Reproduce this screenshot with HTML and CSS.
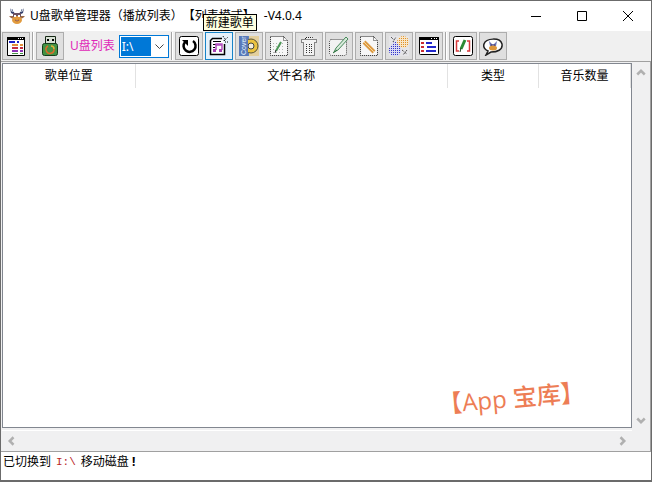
FILE: index.html
```html
<!DOCTYPE html>
<html lang="zh-CN">
<head>
<meta charset="utf-8">
<title>U盘歌单管理器</title>
<link rel="stylesheet" href="styles.css">
</head>
<body>
<div class="window">
  <header class="titlebar">
    <svg class="logo" viewBox="0 0 16 16" aria-hidden="true">
      <path d="M1 0l1 5 4 2-1-3-2 0zM15 0l-1 5-4 2 1-3 2 0z" fill="#34406e"/>
      <path d="M3 1l1 3M13 1l-1 3" stroke="#71809f"/>
      <path d="M4 5h8v5l-4 2-4-2z" fill="#6b5262"/>
      <path d="M0 8l4 0 1 3-3-1zM16 8l-4 0-1 3 3-1z" fill="#9b6948"/>
      <ellipse cx="8" cy="12" rx="5" ry="4" fill="#e29b3e"/>
      <path d="M5 7h2v2H5zM9 7h2v2H9z" fill="#fff"/>
      <path d="M6 12q2 2 4 0" fill="#fff" stroke="#8b4a35"/>
    </svg>
    <h1 class="title">U盘歌单管理器（播放列表）【列表模式】</h1>
    <span class="version">-V4.0.4</span>
    <div class="controls">
      <button class="control" aria-label="最小化"><svg viewBox="0 0 12 12"><path d="M1 6.5h10"/></svg></button>
      <button class="control" aria-label="最大化"><svg viewBox="0 0 12 12"><path d="M1.5 1.5h9v9h-9z"/></svg></button>
      <button class="control" aria-label="关闭"><svg viewBox="0 0 12 12"><path d="M1 1l10 10M11 1L1 11"/></svg></button>
    </div>
  </header>

  <nav class="toolbar">
    <button class="tool" aria-label="列表模式">
      <svg viewBox="0 0 20 20"><path d="M1.5 1.5h17v18h-17z" fill="#fff" stroke="#000"/><path d="M1 1h18v3H1z"/><path d="M12 2.5h1M14 2.5h1M16 2.5h1" stroke="#fff"/><path d="M3 6h6M11 6h2" stroke="#1d20c9" stroke-width="2"/><path d="M6 9h6M14 9h3" stroke="#e3913a" stroke-width="2"/><path d="M6 12h6M14 12h3" stroke="#c52d42" stroke-width="2"/><path d="M6 15h6M14 15h3" stroke="#8c32b5" stroke-width="2"/><path d="M6 17.5h6M14 17.5h3" stroke="#459347"/></svg>
    </button>
    <span class="divider"></span>
    <button class="tool" aria-label="U盘">
      <svg viewBox="0 0 20 20"><path d="M5.5.5h10v8h-10z" fill="#d8e1d5" stroke="#152815"/><path d="M7 3h2v2H7zM12 3h2v2h-2z"/><rect x="2.5" y="7.5" width="15" height="12" rx="2" fill="#449344" stroke="#163d1b"/><path d="M8 10a4 4 0 1 0 6 3" fill="none" stroke="#dd6b2b" stroke-width="1.5"/><path d="M11 10a3 3 0 0 1 3 3" fill="none" stroke="#e2b33a" stroke-width="1.5"/></svg>
    </button>
    <label class="drive-label" for="drive">U盘列表</label>
    <div class="drive">
      <select id="drive"><option>I:\</option></select>
      <svg class="chevron" viewBox="0 0 9 6" aria-hidden="true"><path d="M.5.5l4 4 4-4"/></svg>
    </div>
    <span class="divider"></span>
    <button class="tool" aria-label="刷新">
      <svg viewBox="0 0 20 20"><rect x=".5" y=".5" width="19" height="19" rx="2" fill="#fff" stroke="#000"/><path d="M6 6a6 6 0 1 0 8-1" fill="none" stroke="#000" stroke-width="2.5"/><path d="M3 4h6v6z"/></svg>
    </button>
    <div class="tool-holder">
      <button class="tool active" aria-labelledby="tip">
        <svg viewBox="0 0 20 20"><path d="M13 2.5H3.5l-2 2v14h14V8" fill="#fff" stroke="#000" stroke-width="1.5"/><path d="M4 5.5h8M4 8.5h3M4 11.5h2M4 14.5h1" stroke="#000"/><path d="M7 14V8h6v6M7 9h6" fill="none" stroke="#b34fbe" stroke-width="1.5"/><path d="M4 13h3v3H4zM10 13h3v3h-3z" fill="#a641b0"/><path d="M15 5l1-3M15 5l4-4M16 6h4M14 0l1 2" stroke="#000" stroke-dasharray="1 1"/></svg>
      </button>
      <span class="tooltip" id="tip" role="tooltip">新建歌单</span>
    </div>
    <button class="tool" aria-label="封面">
      <svg viewBox="0 0 20 20"><path d="M0 0h20v20H0z" fill="#e3cf9d"/><path d="M0 0h10v20H0z" fill="#5f82be"/><circle cx="12" cy="10" r="7" fill="#ebc33f" stroke="#57543a"/><circle cx="12" cy="10" r="3" fill="#f4efdc" stroke="#44443d"/><path d="M0 0h9v20H0z" fill="#5879b8"/><text class="cover-text" transform="translate(7 19) rotate(-90)">Cover</text></svg>
    </button>
    <button class="tool" aria-label="编辑歌单" disabled>
      <svg viewBox="0 0 20 20"><path d="M1.5.5h13l4 4v15h-17z" fill="#f7f7f7" stroke="#222" stroke-dasharray="1 1"/><path d="M14.5.5v4h4" fill="none" stroke="#333" stroke-dasharray="1 1"/><path d="M4 7.5h12M4 10.5h12M4 13.5h12M4 16.5h12" stroke="#b5b8b5" stroke-dasharray="1 2"/><path d="M12 6l-5 9" stroke="#4c9756" stroke-width="2"/><path d="M6 17l1-3" stroke="#333"/></svg>
    </button>
    <button class="tool" aria-label="删除歌单" disabled>
      <svg viewBox="0 0 20 20"><path d="M0 0h20v20H0z" fill="#e3e3e3"/><path d="M2.5 3.5h15v3h-2v13h-11v-13h-2zM6.5 3V1.5h7V3" fill="#f2f2f2" stroke="#222" stroke-dasharray="1 1"/><path d="M7.5 8v10M10.5 8v10M12.5 8v10" stroke="#333" stroke-dasharray="1 1"/></svg>
    </button>
    <button class="tool" aria-label="重命名" disabled>
      <svg viewBox="0 0 20 20"><rect x=".5" y="3.5" width="17" height="16" rx="2" fill="#f2f2f2" stroke="#444" stroke-dasharray="1 1"/><path d="M5 16l2-4L17 1l2 2L9 14z" fill="#d8eadb" stroke="#47895a"/><path d="M4 17l4-3" stroke="#286d38"/></svg>
    </button>
    <button class="tool" aria-label="清理" disabled>
      <svg viewBox="0 0 20 20"><path d="M1.5.5h13l4 4v15h-17z" fill="#f7f7f7" stroke="#222" stroke-dasharray="1 1"/><path d="M14.5.5v4h4" fill="none" stroke="#333" stroke-dasharray="1 1"/><path d="M5 6l10 10" stroke="#dd9b42" stroke-width="4"/><path d="M5 6l10 10" stroke="#f5d49c"/></svg>
    </button>
    <button class="tool" aria-label="转换" disabled>
      <svg viewBox="0 0 20 20">
        <defs><pattern id="blue" width="2" height="2" patternUnits="userSpaceOnUse"><path d="M0 0h2v2H0z" fill="#d9daf3"/><path d="M0 0h1v1H0z" fill="#3335c7"/></pattern><pattern id="gold" width="2" height="2" patternUnits="userSpaceOnUse"><path d="M0 0h2v2H0z" fill="#f8e6c8"/><path d="M0 0h1v1H0z" fill="#e09025"/></pattern></defs>
        <path d="M0 0h20v20H0z" fill="#e5e5e8"/><circle cx="14" cy="6" r="6" fill="url(#gold)"/><path d="M6 5l6 7v4l-3 4H3l-3-4v-4z" fill="url(#blue)"/><path d="M4 6l3-5M2 1l3 3M13 14l5 4M18 14l-4 5" stroke="#222" stroke-dasharray="1 1"/></svg>
    </button>
    <button class="tool" aria-label="详细列表">
      <svg viewBox="0 0 20 20"><rect x=".5" y="1.5" width="19" height="17" rx="1" fill="#fff" stroke="#000"/><path d="M0 1h20v3H0z"/><path d="M12 2.5h1M15 2.5h1M17 2.5h1" stroke="#fff"/><path d="M2 7h3M2 11h3M2 15h3" stroke="#ca2c32" stroke-width="2"/><path d="M7 7h6M8 11h9M7 15h10" stroke="#2228cb" stroke-width="2"/></svg>
    </button>
    <span class="divider"></span>
    <button class="tool" aria-label="编辑标签">
      <svg viewBox="0 0 20 20"><rect x=".5" y=".5" width="19" height="19" rx="2" fill="#fff" stroke="#000"/><path d="M6 5H3.5v10H6M14 5h2.5v10H14" fill="none" stroke="#d7393b" stroke-width="1.5"/><path d="M12 4L8 13" stroke="#298a34" stroke-width="3"/><path d="M8 12l-1 4" stroke="#173e1c"/></svg>
    </button>
    <button class="tool" aria-label="关于">
      <svg viewBox="0 0 20 20"><path d="M5 15C1 13 0 11 1 8c2-6 16-7 18 0 1 6-5 8-11 8l-5 3z" fill="#fff" stroke="#222" stroke-width="1.5"/><path d="M6 5l3 3h2l3-3-1 5H7z" fill="#6570b5"/><ellipse cx="10" cy="12" rx="4" ry="2.5" fill="#db963c"/><path d="M8 9h1M11 9h1" stroke="#603043"/></svg>
    </button>
  </nav>

  <main class="panel">
    <div class="list">
      <table>
        <colgroup><col class="col-place"><col><col class="col-type"><col class="col-count"></colgroup>
        <thead><tr><th>歌单位置</th><th>文件名称</th><th>类型</th><th>音乐数量</th></tr></thead>
        <tbody></tbody>
      </table>
      <p class="brand">【App 宝库】</p>
    </div>
    <div class="vscroll">
      <button aria-label="向上滚动"><svg viewBox="0 0 8 6"><path d="M1 5l3-3 3 3"/></svg></button>
      <button aria-label="向下滚动"><svg viewBox="0 0 8 6"><path d="M1 1l3 3 3-3"/></svg></button>
    </div>
    <div class="hscroll">
      <button aria-label="向左滚动"><svg viewBox="0 0 6 8"><path d="M5 1L2 4l3 3"/></svg></button>
      <button aria-label="向右滚动"><svg viewBox="0 0 6 8"><path d="M1 1l3 3-3 3"/></svg></button>
    </div>
  </main>

  <footer class="status"><span>已切换到</span><span class="path">I:\</span><span>移动磁盘 <b>!</b></span></footer>
</div>
</body>
</html>
```
FILE: styles.css
```css
* { box-sizing: border-box; }

body {
  margin: 0;
  color: #000;
  font: 12px/16px "Noto Sans", "Noto Sans CJK SC", sans-serif;
  text-spacing-trim: space-all;
}

button {
  padding: 0;
  border: 0;
  background: none;
}

svg { display: block; }

.window {
  display: flex;
  flex-direction: column;
  min-height: 100vh;
  border: 1px solid #6b6b6b;
  border-bottom-width: 2px;
  background: #fff;
}

.titlebar {
  display: flex;
  align-items: center;
  height: 30px;
  padding-left: 8px;
}

.logo { width: 16px; height: 16px; }
.title { margin: 0 9px 0 5px; font: inherit; white-space: nowrap; }

.controls { display: flex; margin-left: auto; }
.control { display: grid; place-items: center; width: 46px; height: 28px; }
.control svg { width: 12px; height: 12px; fill: none; stroke: #000; }

.toolbar {
  display: flex;
  align-items: center;
  gap: 2px;
  height: 30px;
  padding-left: 1px;
  background: #f0f0f0;
}

.tool {
  display: grid;
  flex: none;
  place-items: center;
  width: 28px;
  height: 28px;
  border: 1px solid #adadad;
  background: #dfdfdf;
}
.tool svg { width: 20px; height: 20px; }
.tool.active { border-color: #1883c7; background: #e5f1fb; }
.tool-holder { position: relative; }

.cover-text { fill: #e8f4ff; font: 7px "Liberation Sans", sans-serif; }

.tooltip {
  position: absolute;
  z-index: 1;
  bottom: 29px;
  left: -2px;
  padding: 0 2px;
  border: 1px solid #000;
  background: #ffffe1;
  line-height: 15px;
  white-space: nowrap;
}

.divider {
  width: 2px;
  height: 28px;
  border-right: 1px solid #fff;
  border-left: 1px solid #a5a5a5;
}

.drive-label { margin: 0 2px 0 4px; color: #e028b8; white-space: nowrap; }
.drive { position: relative; width: 50px; height: 23px; }
.drive select {
  width: 100%;
  height: 100%;
  padding: 0 0 0 2px;
  appearance: none;
  border: 1px solid #0078d7;
  border-radius: 0;
  background: linear-gradient(to right, #0078d7 30px, #fff 30px) 1px 1px / 100% 19px no-repeat #fff;
  color: #fff;
  font: 12px "Noto Sans", sans-serif;
}
.chevron {
  position: absolute;
  top: 9px;
  right: 5px;
  width: 9px;
  height: 6px;
  fill: none;
  stroke: #444;
  pointer-events: none;
}

.panel {
  display: grid;
  flex: 1;
  grid-template-columns: 1fr 18px;
  grid-template-rows: 1fr 23px;
  padding: 1px 0 0 1px;
  border: 1px solid #a0a0a0;
  border-left: 0;
  background: #f0f0f1;
}

.list {
  position: relative;
  border: 1px solid #828790;
  background: #fff;
}
.list table { width: 100%; border-collapse: collapse; table-layout: fixed; }
.list th {
  height: 24px;
  padding: 0;
  border-right: 1px solid #e2e2e2;
  font-weight: 400;
}
.col-place { width: 132px; }
.col-type { width: 91px; }
.col-count { width: 92px; }

.brand {
  position: absolute;
  right: 46px;
  bottom: 11px;
  margin: 0;
  color: #ed7d55;
  font: 500 24px/36px "Open Sans", "Noto Sans CJK SC", sans-serif;
  white-space: nowrap;
  transform: rotate(-5deg);
}

.vscroll, .hscroll { display: flex; justify-content: space-between; }
.vscroll { flex-direction: column; padding: 5px 0 3px; }
.hscroll { padding: 2px 5px; margin-top: 2px; border-top: 1px solid #fff; }
.vscroll button, .hscroll button { display: grid; place-items: center; }
.vscroll svg { width: 10px; height: 8px; }
.hscroll svg { width: 8px; height: 10px; }
.vscroll svg, .hscroll svg { fill: none; stroke: #b0b0b0; stroke-width: 2; }

.status {
  display: flex;
  gap: 5px;
  height: 28px;
  padding: 1px 2px;
  line-height: 18px;
}
.path { color: #b92727; font: 11px/18px "Liberation Mono", monospace; }
```
